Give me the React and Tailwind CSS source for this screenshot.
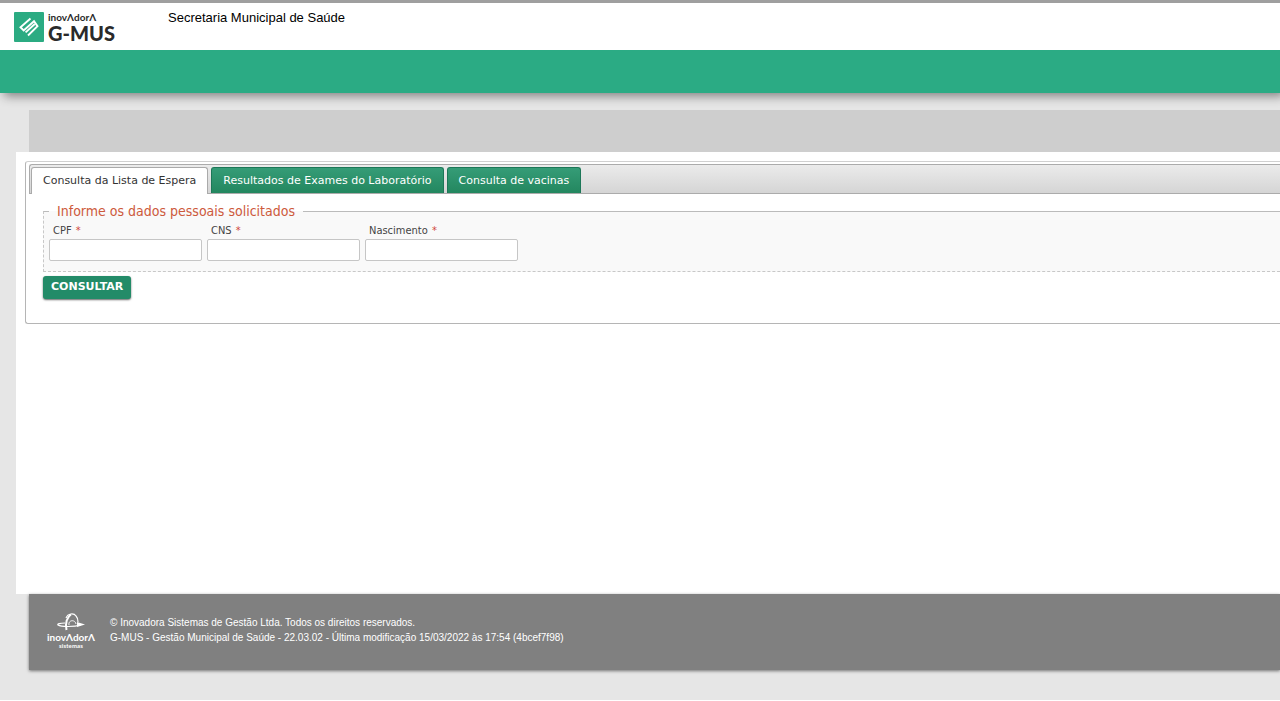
import { useState } from "react";

const tabs = [
  { id: "espera", label: "Consulta da Lista de Espera" },
  { id: "exames", label: "Resultados de Exames do Laboratório" },
  { id: "vacinas", label: "Consulta de vacinas" },
];

const fields = [
  { name: "cpf", label: "CPF" },
  { name: "cns", label: "CNS" },
  { name: "nascimento", label: "Nascimento" },
];

const emptyForm = { cpf: "", cns: "", nascimento: "" };

function GmusLogo() {
  return (
    <div className="flex w-[154px] gap-1 pl-[14px] pt-[9px]">
      <svg width="30" height="30" viewBox="0 0 30 30" className="shrink-0">
        <rect width="30" height="30" rx="1" fill="#2bab82" />
        <g fill="none" stroke="#fff" strokeWidth="1.9">
          <path d="M16.5 6.5 L6.5 15.2 L9.7 18.4 L20 9.2 L23.5 14.2 L14 23.5" />
          <path d="M20.8 12 L11.6 20.4" />
        </g>
      </svg>
      <div className="flex flex-col font-[family-name:Lato,sans-serif] text-[#2a2a2a]">
        <span className="text-[10px] font-bold leading-[11px]">inovΛdorΛ</span>
        <span className="text-[20px] font-black leading-[20px]">G-MUS</span>
      </div>
    </div>
  );
}

function InovadoraLogo() {
  return (
    <div className="flex w-[50px] flex-col items-center font-[family-name:Lato,sans-serif] text-white">
      <svg width="28" height="18" viewBox="0 0 28 18" fill="none" stroke="#fff">
        <path d="M9 5 C11 0 17 0 19 3 C21 5 21 8 21 9" strokeWidth="1.2" />
        <path d="M14 1.5 C10 4 8 10 9.5 17" strokeWidth="2" />
        <path d="M12 12 C11 7 18 6 19 11" strokeWidth="0.9" />
        <path d="M8 10 C3 10 0 11 1 12 C4 14 17 14 24 12" strokeWidth="1.2" />
        <path d="M20 9 L28 11.5 L20 14 Z" fill="#fff" stroke="none" />
      </svg>
      <span className="text-[10px] font-bold leading-[12px]">inovΛdorΛ</span>
      <span className="text-[6px] font-bold leading-[6px] tracking-wide">sistemas</span>
    </div>
  );
}

export default function App() {
  const [active, setActive] = useState("espera");
  const [form, setForm] = useState(emptyForm);

  function handleChange(e) {
    const { name, value } = e.target;
    setForm((prev) => ({ ...prev, [name]: value }));
  }

  return (
    <div className="overflow-hidden bg-white font-['Liberation_Sans',Arial,sans-serif]">
      {/* ---- HEADER ---- */}
      <header className="relative border-t-3 border-[#9f9f9f] bg-white shadow-[4px_3px_10px_rgba(0,0,0,0.45)]">
        <div className="flex h-[47px]">
          <GmusLogo />
          <p className="pl-[14px] pt-[7px] text-[13px] leading-4 text-black">Secretaria Municipal de Saúde</p>
        </div>
        <div className="h-[43px] bg-[#2bab84]" />
      </header>

      <div className="bg-[#e6e6e6] pb-[30px] pt-[17px]">
        <div className="ml-[29px] h-[42px] bg-[#cecece]" />

        {/* ---- CONTENT ---- */}
        <main className="ml-4 min-h-[442px] bg-white pl-[9px] pt-[9px] font-['DejaVu_Sans',Verdana,sans-serif] text-[11px]">
          <div className="rounded-l-[3px] border border-r-0 border-[#b5b5b5] border-t-[#d0d0d0] pl-[3px] pt-[2px]">
            <div
              role="tablist"
              className="flex h-[30px] items-end gap-[3px] rounded-tl-[3px] border border-r-0 border-[#ababab] bg-linear-to-b from-[#ebebeb] to-[#d5d5d5] pl-px"
            >
              {tabs.map((t) => (
                <button
                  key={t.id}
                  type="button"
                  role="tab"
                  aria-selected={active === t.id}
                  onClick={() => setActive(t.id)}
                  className={
                    active === t.id
                      ? "-mb-px h-[27px] rounded-t-[3px] border border-b-0 border-[#aaa] bg-white px-[11px] text-[#333]"
                      : "h-[26px] rounded-t-[3px] border border-b-0 border-[#1d7758] bg-linear-to-b from-[#359c77] to-[#23875f] px-[11px] pt-[2px] text-white"
                  }
                >
                  {t.label}
                </button>
              ))}
            </div>

            <form className="pb-6 pl-[14px] pt-[9px]" onSubmit={(e) => e.preventDefault()}>
              <fieldset className="border border-r-0 border-dashed border-[#c8c8c8] border-t-[#bbb] bg-[#f9f9f9] pb-[10px] pl-[5px] [border-top-style:solid]">
                <legend className="px-2 font-['DejaVu_Sans_Condensed',Tahoma,sans-serif] text-[14px] leading-4 text-[#cd5a3c]">
                  Informe os dados pessoais solicitados
                </legend>
                <div className="flex gap-[5px] pt-[3px] font-['DejaVu_Sans_Condensed',Tahoma,sans-serif]">
                  {fields.map((f) => (
                    <div key={f.name} className="flex flex-col">
                      <label htmlFor={f.name} className="pl-1 leading-[17px] text-[#444]">
                        {f.label} <span className="ml-px text-[#d0453a]">*</span>
                      </label>
                      <input
                        id={f.name}
                        name={f.name}
                        type="text"
                        value={form[f.name]}
                        onChange={handleChange}
                        className="h-[22px] w-[153px] rounded-[2px] border border-[#c6c6c6] bg-white px-1"
                      />
                    </div>
                  ))}
                </div>
              </fieldset>
              <button
                type="submit"
                className="mt-1 h-[23px] rounded-[3px] bg-[#238b68] px-2 font-bold text-white shadow-[0_1px_2px_rgba(0,0,0,0.6)]"
              >
                CONSULTAR
              </button>
            </form>
          </div>
        </main>

        {/* ---- FOOTER ---- */}
        <footer className="ml-[29px] flex h-[76px] gap-[14px] bg-[#808080] pl-[17px] pt-[19px] text-[10px] leading-[15px] text-white shadow-[0_1px_3px_rgba(0,0,0,0.5)]">
          <InovadoraLogo />
          <div className="pt-[2px]">
            <p>© Inovadora Sistemas de Gestão Ltda. Todos os direitos reservados.</p>
            <p>G-MUS - Gestão Municipal de Saúde - 22.03.02 - Última modificação 15/03/2022 às 17:54 (4bcef7f98)</p>
          </div>
        </footer>
      </div>
    </div>
  );
}
